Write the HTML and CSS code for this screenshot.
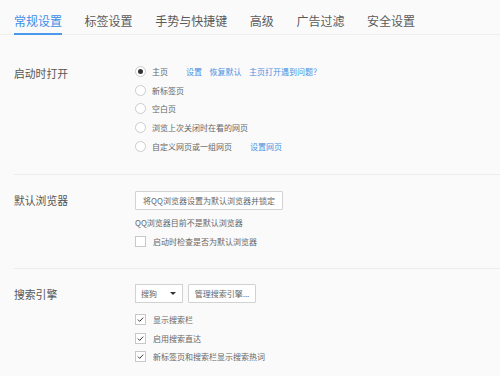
FILE: index.html
```html
<!DOCTYPE html>
<html lang="zh-CN">
  <head>
    <meta charset="UTF-8" />
    <meta name="viewport" content="width=device-width, initial-scale=1.0" />
    <title>设置</title>
    <link rel="stylesheet" href="styles.css">
  </head>

  <body>
    <nav class="tabs">
      <div class="tab tab-active">常规设置</div>
      <div class="tab">标签设置</div>
      <div class="tab">手势与快捷键</div>
      <div class="tab">高级</div>
      <div class="tab">广告过滤</div>
      <div class="tab">安全设置</div>
    </nav>

    <section class="setting setting-startup">
      <div class="setting-label">启动时打开</div>
      <div class="setting-body">
        <div class="row">
          <span class="radio radio-checked"></span>
          <span>主页</span>
          <a class="link link-first">设置</a>
          <a class="link">恢复默认</a>
          <a class="link">主页打开遇到问题？</a>
        </div>
        <div class="row"><span class="radio"></span><span>新标签页</span></div>
        <div class="row"><span class="radio"></span><span>空白页</span></div>
        <div class="row"><span class="radio"></span><span>浏览上次关闭时在看的网页</span></div>
        <div class="row">
          <span class="radio"></span>
          <span>自定义网页或一组网页</span>
          <a class="link link-first">设置网页</a>
        </div>
      </div>
    </section>

    <section class="setting setting-default">
      <div class="setting-label">默认浏览器</div>
      <div class="setting-body">
        <button class="btn btn-default">将QQ浏览器设置为默认浏览器并锁定</button>
        <div class="row row-note">QQ浏览器目前不是默认浏览器</div>
        <div class="row"><span class="check"></span><span>启动时检查是否为默认浏览器</span></div>
      </div>
    </section>

    <section class="setting setting-search">
      <div class="setting-label">搜索引擎</div>
      <div class="setting-body">
        <div class="controls">
          <div class="select">
            <span>搜狗</span>
            <span class="select-arrow"></span>
          </div>
          <button class="btn">管理搜索引擎...</button>
        </div>
        <div class="row row-first">
          <span class="check check-on"><svg viewBox="0 0 11 11"><path d="M2.3 5.6 L4.5 7.8 L8.8 3.2" /></svg></span>
          <span>显示搜索栏</span>
        </div>
        <div class="row">
          <span class="check check-on"><svg viewBox="0 0 11 11"><path d="M2.3 5.6 L4.5 7.8 L8.8 3.2" /></svg></span>
          <span>启用搜索直达</span>
        </div>
        <div class="row">
          <span class="check check-on"><svg viewBox="0 0 11 11"><path d="M2.3 5.6 L4.5 7.8 L8.8 3.2" /></svg></span>
          <span>新标签页和搜索栏显示搜索热词</span>
        </div>
      </div>
    </section>
  </body>
</html>
```

FILE: styles.css
```css
body {
  margin: 0;
  background: #fafafa;
  font-family: "Noto Sans CJK SC", "Noto Sans", sans-serif;
  color: #666;
}

.tabs {
  display: flex;
  gap: 22.6px;
  padding-left: 14px;
  border-bottom: 1px solid #efefef;
}
.tab {
  font-size: 12px;
  line-height: 16px;
  padding: 13px 0 4px;
  border-bottom: 2px solid transparent;
  margin-bottom: -1px;
  color: #5a5a5a;
}
.tab-active {
  color: #3d8ee8;
  border-bottom-color: #4b98ec;
}

.setting {
  display: flex;
  margin-left: 14px;
  border-bottom: 1px solid #ececec;
}
.setting-label {
  width: 121px;
  flex-shrink: 0;
  font-size: 10.8px;
  color: #555;
}
.setting-startup {
  padding: 27px 0 19px;
}
.setting-startup .setting-label {
  line-height: 18.7px;
  padding-top: 2px;
}
.setting-default {
  padding: 16px 0 18px;
}
.setting-default .setting-label {
  line-height: 19px;
}
.setting-search {
  padding: 15px 0 20px;
  border-bottom: 0;
}
.setting-search .setting-label {
  line-height: 19px;
  padding-top: 1px;
}

.row {
  display: flex;
  align-items: center;
  height: 18.7px;
  font-size: 8px;
  color: #666;
}
.row-note {
  margin-top: 2.6px;
}
.row-first {
  margin-top: 6.6px;
}

.radio {
  width: 9px;
  height: 9px;
  border: 1px solid #cccccc;
  border-radius: 50%;
  background: #fff;
  margin-right: 6px;
  display: flex;
  align-items: center;
  justify-content: center;
}
.radio-checked::after {
  content: "";
  width: 5px;
  height: 5px;
  border-radius: 50%;
  background: #333;
}

.check {
  width: 9px;
  height: 9px;
  border: 1px solid #c8c8c8;
  background: #fff;
  margin-right: 7px;
  display: flex;
}
.check svg {
  width: 9px;
  height: 9px;
}
.check svg path {
  fill: none;
  stroke: #333;
  stroke-width: 1.2;
}

.link {
  color: #4a90e2;
  margin-left: 7.5px;
}
.link-first {
  margin-left: 18px;
}

.btn {
  font-family: inherit;
  font-size: 8px;
  color: #666;
  background: #fff;
  border: 1px solid #d2d2d2;
  border-radius: 1px;
  height: 19px;
  padding: 0 8px;
  display: block;
}
.btn-default {
  width: 148px;
  padding: 0;
}

.controls {
  display: flex;
  gap: 5px;
}
.controls .btn {
  width: 68px;
  padding: 0;
}
.select {
  width: 46px;
  height: 17px;
  border: 1px solid #d2d2d2;
  background: #fff;
  font-size: 8px;
  display: flex;
  align-items: center;
  justify-content: space-between;
}
.select span:first-child {
  margin-left: 5px;
}
.select-arrow {
  width: 0;
  height: 0;
  border-left: 3px solid transparent;
  border-right: 3px solid transparent;
  border-top: 3.5px solid #333;
  margin-right: 6px;
}
```
